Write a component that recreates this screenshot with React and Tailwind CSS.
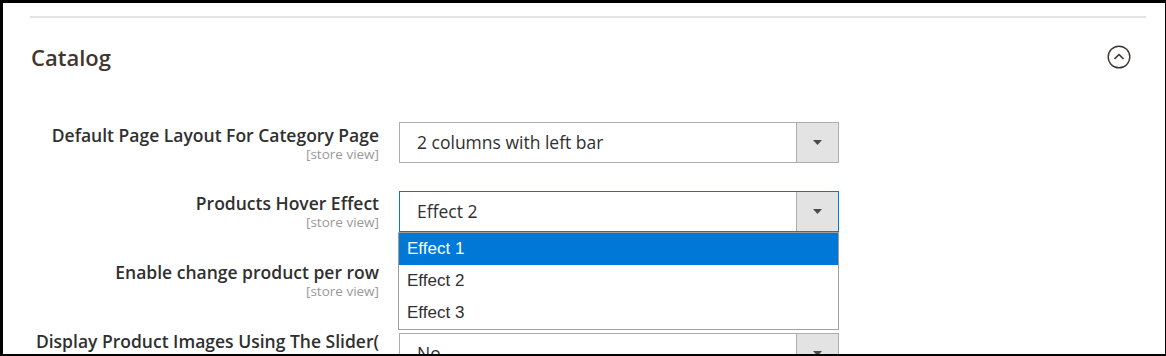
import React from "react";

const OS = { fontFamily: '"Open Sans", "Liberation Sans", sans-serif' };
const AR = { fontFamily: '"Liberation Sans", Arial, sans-serif' };

function Arrow() {
  return (
    <svg width="9" height="5" viewBox="0 0 9 5">
      <path d="M0 0 L9 0 L4.5 5 Z" fill="#514943" />
    </svg>
  );
}

function Select({ value, focused, children }) {
  return (
    <div className="relative w-[440px] h-[41px]">
      <div
        className={`flex h-full w-full border bg-white ${focused ? "border-[#007bdb]" : "border-[#adadad]"}`}
      >
        <div className="flex-1 flex items-center pl-[17px] text-[17.5px] text-[#303030]" style={OS}>
          {value}
        </div>
        <div className="w-[42px] h-full bg-[#e3e3e3] border-l border-[#adadad] flex items-center justify-center">
          <Arrow />
        </div>
      </div>
      {children}
    </div>
  );
}

function Label({ title, scope = true, pt = "pt-[2px]" }) {
  return (
    <div className={`w-[349px] shrink-0 text-right ${pt}`} style={OS}>
      <div className="text-[17.5px] leading-[22px] font-semibold text-[#303030] whitespace-nowrap">{title}</div>
      {scope && <div className="text-[13.5px] leading-[17px] text-[#999999]">[store view]</div>}
    </div>
  );
}

export default function App() {
  return (
    <div className="w-[1166px] h-[356px] bg-black pt-[3px] pl-[3px] pr-[1px] pb-[2px]">
      <div className="w-full h-full bg-white overflow-hidden pl-[27px] pr-[19px] pt-[13px]">
        <div className="h-[2px] bg-[#e3e3e3]" />
        <div className="mt-[24px] flex items-center justify-between pl-[1px]">
          <h2 className="text-[22px] leading-[30px] font-semibold text-[#41362f]" style={OS}>Catalog</h2>
          <svg width="24" height="24" viewBox="0 0 24 24" className="mr-[15px]">
            <circle cx="12" cy="12" r="10.8" fill="none" stroke="#41362f" strokeWidth="1.4" />
            <path d="M7.5 13.8 L12 9.5 L16.5 13.8" fill="none" stroke="#41362f" strokeWidth="1.6" />
          </svg>
        </div>
        <div className="mt-[50px] flex flex-col">
          <div className="flex gap-[20px]">
            <Label title="Default Page Layout For Category Page" />
            <Select value="2 columns with left bar" />
          </div>
          <div className="flex gap-[20px] mt-[28px] relative z-10">
            <Label title="Products Hover Effect" pt="pt-[1px]" />
            <Select value="Effect 2" focused>
              <div
                className="absolute left-[-1px] top-[41px] w-[441px] bg-white border border-[#a0a0a0] text-[17px] text-[#303030]"
                style={AR}
              >
                <div className="h-[32px] flex items-center pl-[8px] bg-[#0078d7] text-white">Effect 1</div>
                <div className="h-[32px] flex items-center pl-[8px]">Effect 2</div>
                <div className="h-[32px] flex items-center pl-[8px]">Effect 3</div>
              </div>
            </Select>
          </div>
          <div className="flex gap-[20px] mt-[28px]">
            <Label title="Enable change product per row" pt="pt-[1px]" />
            <Select value="" />
          </div>
          <div className="flex gap-[20px] mt-[32px]">
            <Label title="Display Product Images Using The Slider(" scope={false} pt="-mt-[3px]" />
            <Select value="No" />
          </div>
        </div>
      </div>
    </div>
  );
}
